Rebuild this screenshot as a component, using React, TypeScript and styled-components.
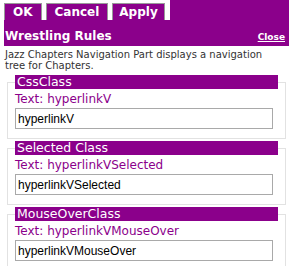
import React from "react";
import styled, { createGlobalStyle } from "styled-components";

const PURPLE = "#8b008b";

const Global = createGlobalStyle`
  html, body { margin: 0; padding: 0; background: #fff; }
  body { font-family: "DejaVu Sans", Verdana, sans-serif; width: 289px; overflow: hidden; }
`;

const Page = styled.div`
  width: 289px;
  display: flex;
  flex-direction: column;
`;

const Toolbar = styled.div`
  display: flex;
  align-items: flex-end;
  height: 20px;
  padding-left: 4px;
  gap: 4px;
`;

const ToolButton = styled.button<{ $pad?: number }>`
  height: 17px;
  margin: 0;
  padding: 0 ${(p) => p.$pad ?? 8}px;
  border: 1px solid #9a9a9a;
  border-bottom: none;
  background: ${PURPLE};
  color: #fff;
  font-family: "DejaVu Sans", Verdana, sans-serif;
  font-weight: bold;
  font-size: 12px;
  line-height: 16px;
  cursor: pointer;
`;

const Filler = styled.div`
  flex: 1;
  align-self: stretch;
  margin-left: 1px;
  background: ${PURPLE};
`;

const Header = styled.div`
  margin-left: 4px;
  background: ${PURPLE};
  display: flex;
  align-items: baseline;
  justify-content: space-between;
  padding: 9px 4px 2px 1px;
`;

const Title = styled.span`
  color: #fff;
  font-weight: bold;
  font-size: 12px;
  line-height: 15px;
`;

const CloseLink = styled.a`
  color: #fff;
  font-weight: bold;
  font-size: 9px;
  text-decoration: underline;
  cursor: pointer;
`;

const Description = styled.div`
  padding: 3px 12px 0 5px;
  font-size: 10px;
  line-height: 11px;
  color: #333;
`;

const Group = styled.fieldset`
  margin: 4px 3px 2px 7px;
  padding: 0 7px 9px 7px;
  border: 1px solid #e2e2e2;
  min-width: 0;
  & + & {
    margin-top: 0;
  }
`;

const Legend = styled.legend`
  width: 100%;
  box-sizing: border-box;
  margin: 0;
  padding: 0 2px;
  background: ${PURPLE};
  color: #fff;
  font-size: 12.5px;
  line-height: 14px;
  height: 14px;
`;

const FieldLabel = styled.div`
  padding-top: 2px;
  color: ${PURPLE};
  font-size: 12px;
  line-height: 17px;
  white-space: nowrap;
`;

const TextInput = styled.input`
  display: block;
  box-sizing: border-box;
  width: 258px;
  height: 21px;
  margin: 0;
  padding: 0 2px;
  border: 1px solid #a9a9a9;
  font-family: "Liberation Sans", Arial, sans-serif;
  font-size: 12px;
  color: #000;
  background: #fff;
  outline: none;
`;

const fields = [
  { legend: "CssClass", value: "hyperlinkV" },
  { legend: "Selected Class", value: "hyperlinkVSelected" },
  { legend: "MouseOverClass", value: "hyperlinkVMouseOver" },
];

export default function App() {
  return (
    <>
      <Global />
      <Page>
        <Toolbar>
          <ToolButton>OK</ToolButton>
          <ToolButton>Cancel</ToolButton>
          <ToolButton $pad={6}>Apply</ToolButton>
          <Filler />
        </Toolbar>
        <Header>
          <Title>Wrestling Rules</Title>
          <CloseLink>Close</CloseLink>
        </Header>
        <Description>
          Jazz Chapters Navigation Part displays a navigation tree for Chapters.
        </Description>
        {fields.map((f) => (
          <Group key={f.legend}>
            <Legend>{f.legend}</Legend>
            <FieldLabel>Text: {f.value}</FieldLabel>
            <TextInput defaultValue={f.value} />
          </Group>
        ))}
      </Page>
    </>
  );
}
